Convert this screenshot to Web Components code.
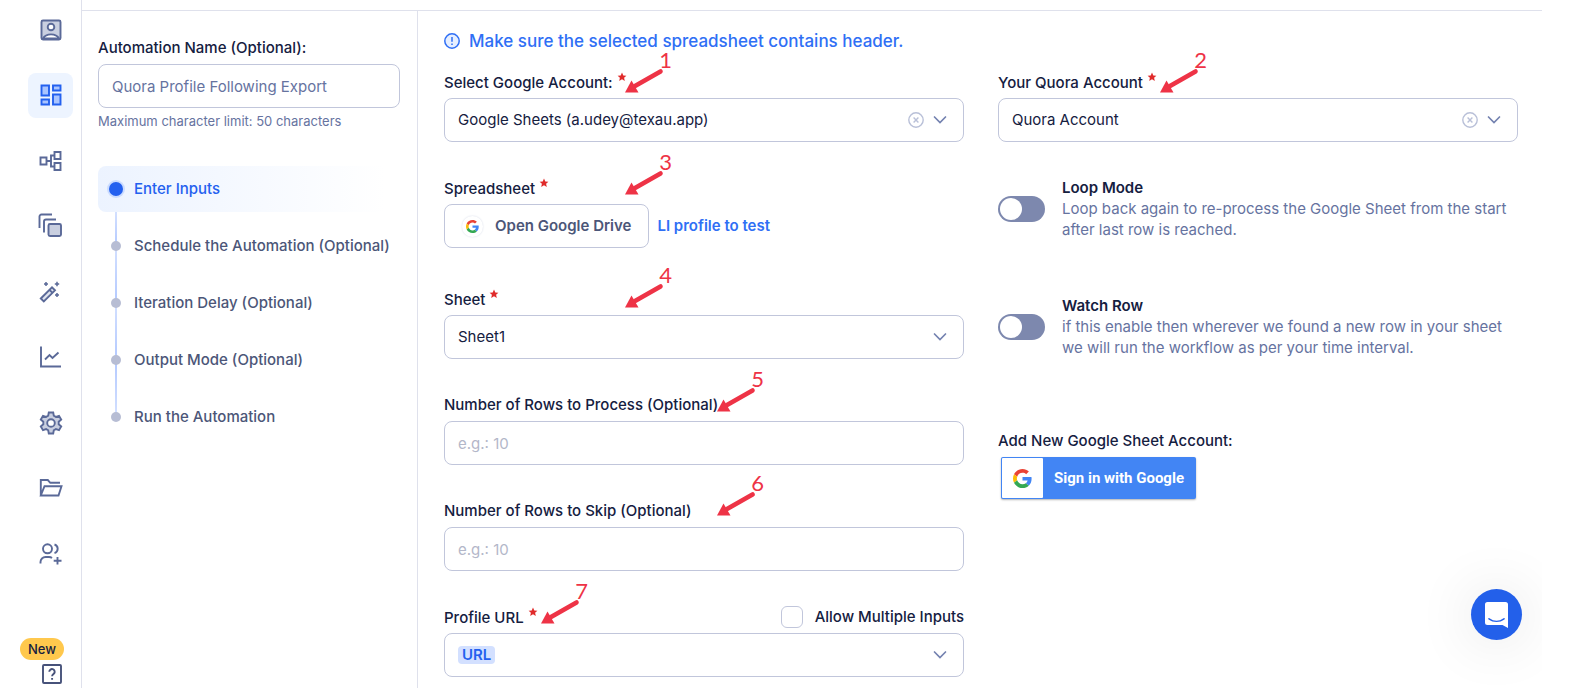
<!DOCTYPE html>
<html lang="en">
<head>
  <meta charset="UTF-8">
  <meta name="viewport" content="width=device-width, initial-scale=1.0">
  <title>Quora Profile Following Export</title>
  <style>
    body {
      margin: 0;
      background: #fff;
      color: #15203f;
      font-family: Inter, "Liberation Sans", sans-serif;
      font-size: 15px;
      line-height: 20px;
    }
  </style>
</head>
<body>
  <automation-app></automation-app>

  <script>
    // shared by every field component
    const fieldStyles = `
      * { box-sizing: border-box; }
      :host { display: block; position: relative; }
      .head { display: flex; align-items: center; justify-content: space-between; height: 22px; margin-bottom: 5px; }
      .label { font-weight: 500; white-space: nowrap; }
      .star { width: 10px; height: 10px; vertical-align: 6px; }
      .box {
        display: flex;
        align-items: center;
        width: 100%;
        height: 44px;
        border: 1px solid #c1c6db;
        border-radius: 8px;
        background: #fff;
      }
      input, select, button { font: inherit; color: inherit; }
    `;

    const star = `<svg class="star" viewBox="0 0 10 10" aria-hidden="true"><path fill="#e02b2b" d="M5 .6l1.3 2.8 3.1.3-2.3 2.1.7 3.1L5 7.3 2.2 8.9l.7-3.1L.6 3.7l3.1-.3z"/></svg>`;
    const chevron = `<svg class="chevron" width="14" height="10" viewBox="0 0 14 10" aria-hidden="true"><path d="M1.500 2L7 7.500l5.500-5.500" fill="none" stroke="#7482b0" stroke-width="1.700" stroke-linecap="round"/></svg>`;
    const googleG = `
      <svg class="g" viewBox="0 0 48 48" aria-hidden="true">
        <path fill="#ea4335" d="M24 9.500c3.540 0 6.710 1.220 9.210 3.600l6.850-6.850C35.900 2.380 30.470 0 24 0 14.620 0 6.510 5.380 2.560 13.220l7.980 6.190C12.430 13.720 17.740 9.500 24 9.500z"/>
        <path fill="#4285f4" d="M46.980 24.550c0-1.570-.150-3.090-.380-4.550H24v9.020h12.940c-.580 2.960-2.260 5.480-4.780 7.180l7.730 6c4.510-4.180 7.090-10.360 7.090-17.650z"/>
        <path fill="#fbbc05" d="M10.530 28.590c-.480-1.450-.760-2.990-.760-4.590s.270-3.140.760-4.590l-7.980-6.190C.920 16.460 0 20.120 0 24s.920 7.540 2.560 10.780l7.970-6.190z"/>
        <path fill="#34a853" d="M24 48c6.480 0 11.930-2.130 15.890-5.810l-7.730-6c-2.150 1.450-4.920 2.300-8.160 2.300-6.260 0-11.570-4.220-13.470-9.910l-7.980 6.190C6.510 42.620 14.620 48 24 48z"/>
      </svg>`;

    class TextField extends HTMLElement {
      constructor() {
        super();
        this.attachShadow({ mode: 'open' });
        this.render();
      }

      render() {
        this.shadowRoot.innerHTML = `
          <style>
            ${fieldStyles}
            input.box { padding: 0 13px; outline: none; color: #66739f; }
            input::placeholder { color: #b3b7c9; opacity: 1; }
            .hint { margin-top: 5px; font-size: 13px; line-height: 16px; color: #66739f; }
          </style>
          <div class="head"><label class="label" for="control">${this.getAttribute('label')}</label></div>
          <input class="box" id="control" type="text"
            value="${this.getAttribute('value') || ''}"
            placeholder="${this.getAttribute('placeholder') || ''}">
          ${this.hasAttribute('hint') ? `<div class="hint">${this.getAttribute('hint')}</div>` : ''}
          <slot></slot>
        `;
      }
    }
    customElements.define('text-field', TextField);

    class SelectField extends HTMLElement {
      constructor() {
        super();
        this.attachShadow({ mode: 'open' });
        this.render();
      }

      render() {
        const clear = `
          <button class="clear" type="button" aria-label="Clear">
            <svg width="16" height="16" viewBox="0 0 16 16"><circle cx="8" cy="8" r="7.200"/><path d="M5.600 5.600l4.800 4.800M10.400 5.600l-4.800 4.800"/></svg>
          </button>`;
        this.shadowRoot.innerHTML = `
          <style>
            ${fieldStyles}
            .box { position: relative; }
            select {
              flex: 1;
              align-self: stretch;
              min-width: 0;
              padding: 0 64px 0 13px;
              border: 0;
              border-radius: 8px;
              outline: none;
              background: none;
              appearance: none;
            }
            .chevron { position: absolute; right: 16px; pointer-events: none; }
            .clear { position: absolute; right: 39px; height: 16px; padding: 0; border: 0; background: none; }
            .clear svg { display: block; fill: none; stroke: #b9c0d8; stroke-width: 1.4; }
            .chip {
              margin-left: 13px;
              padding: 0 4px;
              border-radius: 4px;
              background: #d3e0ff;
              color: #2360ef;
              font-size: 15px;
              line-height: 18px;
              font-weight: 600;
            }
          </style>
          <div class="head">
            <label class="label" for="control">${this.getAttribute('label')} ${this.hasAttribute('required') ? star : ''}</label>
            <slot name="extra"></slot>
          </div>
          <div class="box">
            ${this.hasAttribute('chip') ? `<span class="chip">${this.getAttribute('chip')}</span>` : ''}
            <select id="control"><option>${this.getAttribute('value') || ''}</option></select>
            ${this.hasAttribute('clearable') ? clear : ''}
            ${chevron}
          </div>
          <slot></slot>
        `;
      }
    }
    customElements.define('select-field', SelectField);

    class DriveField extends HTMLElement {
      constructor() {
        super();
        this.attachShadow({ mode: 'open' });
        this.shadowRoot.innerHTML = `
          <style>
            ${fieldStyles}
            .row { display: flex; align-items: center; gap: 8px; }
            button.box { width: auto; padding: 0 17px; gap: 12px; font-weight: 600; color: #4c5678; }
            .round { display: grid; place-items: center; width: 21px; height: 21px; border-radius: 50%; box-shadow: 0 0 2px #d5d9e6; }
            .g { width: 13px; height: 13px; }
            a { color: #2f6ff5; font-weight: 600; text-decoration: none; }
          </style>
          <div class="head"><label class="label" for="control">Spreadsheet ${star}</label></div>
          <div class="row">
            <button class="box" id="control" type="button"><span class="round">${googleG}</span>Open Google Drive</button>
            <a href="#sheet">LI profile to test</a>
          </div>
          <slot></slot>
        `;
      }
    }
    customElements.define('drive-field', DriveField);

    class CheckOption extends HTMLElement {
      constructor() {
        super();
        this.attachShadow({ mode: 'open' });
        this.shadowRoot.innerHTML = `
          <style>
            :host { display: block; }
            label { display: flex; align-items: center; gap: 12px; font-weight: 500; }
            input { appearance: none; box-sizing: border-box; width: 22px; height: 22px; margin: 0; border: 1px solid #c1c6db; border-radius: 6px; }
          </style>
          <label><input type="checkbox"><slot></slot></label>
        `;
      }
    }
    customElements.define('check-option', CheckOption);

    class ToggleOption extends HTMLElement {
      constructor() {
        super();
        this.attachShadow({ mode: 'open' });
        this.shadowRoot.innerHTML = `
          <style>
            :host { display: block; }
            label { display: flex; align-items: center; gap: 17px; line-height: 21px; color: #66739f; }
            input { appearance: none; flex: none; display: flex; box-sizing: border-box; width: 47px; height: 26px; margin: 0; padding: 2px; border-radius: 13px; background: #7d88ae; }
            input::before { content: ""; width: 22px; height: 22px; border-radius: 50%; background: #fff; }
            input:checked { justify-content: flex-end; background: #2360ef; }
            strong { display: block; font-weight: 600; color: #15203f; }
          </style>
          <label>
            <input type="checkbox">
            <span><strong>${this.getAttribute('heading')}</strong><slot></slot></span>
          </label>
        `;
      }
    }
    customElements.define('toggle-option', ToggleOption);

    class GoogleSignIn extends HTMLElement {
      constructor() {
        super();
        this.attachShadow({ mode: 'open' });
        this.shadowRoot.innerHTML = `
          <style>
            :host { display: block; }
            p { margin: 0 0 5px; line-height: 22px; font-weight: 500; }
            button {
              display: flex;
              align-items: stretch;
              height: 42px;
              margin: 0 3px;
              padding: 1px;
              border: 0;
              border-radius: 2px;
              background: #4285f4;
              box-shadow: 0 1px 2px rgba(0, 0, 0, .3);
              color: #fff;
              font: 700 15px/40px Roboto, sans-serif;
            }
            .logo { display: grid; place-items: center; width: 41px; border-radius: 1px; background: #fff; }
            .g { width: 19px; height: 19px; }
            .text { padding: 0 11px; }
          </style>
          <p>Add New Google Sheet Account:</p>
          <button type="button"><span class="logo">${googleG}</span><span class="text">Sign in with Google</span></button>
        `;
      }
    }
    customElements.define('google-sign-in', GoogleSignIn);

    // numbered red arrow lying over a field, --x and --y are the arrow tip
    class StepMarker extends HTMLElement {
      constructor() {
        super();
        this.attachShadow({ mode: 'open' });
        this.shadowRoot.innerHTML = `
          <style>
            :host { position: absolute; top: calc(var(--y) - 44px); left: var(--x); width: 52px; height: 44px; pointer-events: none; color: #ee3346; }
            svg { position: absolute; left: 0; bottom: 0; }
            span { position: absolute; right: 5px; top: 2px; font: 400 22px/18px Lato, sans-serif; }
          </style>
          <svg width="40" height="26" viewBox="0 0 40 26" aria-hidden="true">
            <path d="M35.500 4.500L10 19" stroke="currentColor" stroke-width="4.600" stroke-linecap="round"/>
            <path d="M0 25.500L6.500 13.500 13.500 25.500z" fill="currentColor"/>
          </svg>
          <span><slot></slot></span>
        `;
      }
    }
    customElements.define('step-marker', StepMarker);

    class SideNav extends HTMLElement {
      constructor() {
        super();
        this.attachShadow({ mode: 'open' });
        this.render();
      }

      render() {
        const icons = [
          ['Profile', `<rect x="2.500" y="2.500" width="19" height="19" rx="1.500" fill="#c9cfe0"/><circle cx="12" cy="9" r="3.300" fill="#fff"/><path d="M4 20.500c3-5.500 13-5.500 16 0z" fill="#fff"/>`],
          ['Automations', `<path d="M2.500 2.500h7.500v10H2.500zM14 2.500h7.500v5H14zM2.500 16.500h7.500v5H2.500zM14 11.500h7.500v10H14z" fill="#a9c4ff"/>`],
          ['Workflows', `<path d="M1.500 8.500h6v7h-6zM15.500 3h6v7h-6zM15.500 14h6v7h-6zM7.500 12h4.500M15.500 6.500H12v11h3.500"/>`],
          ['Library', `<path d="M.500 14V2.500a2 2 0 012-2H13M5 18.500V7.500a2 2 0 012-2h10"/><rect x="9.500" y="10" width="12.500" height="12" rx="1.500" fill="#c9cfe0"/>`],
          ['Magic', `<path d="M1.800 18.500L13 7.300l3 3L4.800 21.500zM10.500 9.800l3 3" fill="#dfe3ee"/><path d="M7 2v4M5 4h4M18 1.800v4.400M15.800 4h4.400M18 13v4M16 15h4" stroke-width="1.500"/>`],
          ['Analytics', `<path d="M2 1.500v20h20M6 14.500l4.500-4.500 3 3L19.500 7.500"/>`],
          ['Settings', `<path d="M9.800 1.500h4.400l.6 3.200 2.100 1.200 3.100-1.100 2.200 3.800-2.500 2.100v2.600l2.500 2.100-2.200 3.800-3.100-1.100-2.100 1.200-.6 3.200H9.800l-.6-3.200-2.100-1.200L4 19.200l-2.200-3.800 2.500-2.100v-2.600L1.800 8.600 4 4.800l3.100 1.100 2.100-1.200z" fill="#c9cfe0"/><circle cx="12" cy="12" r="3.800" fill="#fff"/>`],
          ['Files', `<path d="M1.800 19.500V4h7l2.500 2.800H21M1.800 19.500l3.700-9.300h17l-3 9.300z"/>`],
          ['Team', `<circle cx="8.500" cy="6.800" r="4.500"/><path d="M1.500 21.500v-1.500a5 5 0 015-5H10c1.300 0 2.200.3 3 .9M15.500 2.500a4.500 4.500 0 010 8.600M18.500 15v7.500M14.700 18.800h7.800"/>`]
        ];
        this.shadowRoot.innerHTML = `
          <style>
            :host { display: flex; flex-direction: column; box-sizing: border-box; width: 82px; min-height: 100vh; border-right: 1px solid #dfe1ec; }
            nav { flex: 1; display: flex; flex-direction: column; justify-content: space-between; padding: 7px 8px 62px 28px; }
            a { display: grid; place-items: center; width: 45px; height: 45px; border-radius: 8px; color: #5a6998; text-decoration: none; }
            a.active { background: #edf4ff; color: #2360ef; }
            svg { width: 24px; height: 24px; overflow: visible; fill: none; stroke: currentColor; stroke-width: 1.9; }
            .foot { display: flex; flex-direction: column; gap: 4px; padding: 0 17px 4px 20px; }
            .badge { width: 44px; border-radius: 11px; background: #ffc84d; font-size: 13px; line-height: 22px; font-weight: 500; text-align: center; }
            .help { display: block; width: auto; height: 20px; margin-left: 20px; color: #47527a; }
            .help svg { display: block; width: 20px; height: 20px; }
          </style>
          <nav>
            ${icons.map(([name, shape], i) => `<a href="#${name.toLowerCase()}" aria-label="${name}"${i === 1 ? ' class="active"' : ''}><svg viewBox="0 0 24 24">${shape}</svg></a>`).join('')}
          </nav>
          <div class="foot">
            <span class="badge">New</span>
            <a class="help" href="#help" aria-label="Help">
              <svg viewBox="0 0 20 20"><rect x="1" y="1" width="18" height="18" rx="1"/><path d="M7.300 7.800a2.700 2.700 0 115 1.400c-.8 1-2.200 1.400-2.200 3.100M10.100 14v1.800"/></svg>
            </a>
          </div>
        `;
      }
    }
    customElements.define('side-nav', SideNav);

    class StepList extends HTMLElement {
      constructor() {
        super();
        this.attachShadow({ mode: 'open' });
        const steps = ['Enter Inputs', 'Schedule the Automation (Optional)', 'Iteration Delay (Optional)', 'Output Mode (Optional)', 'Run the Automation'];
        this.shadowRoot.innerHTML = `
          <style>
            :host { display: block; }
            ol { display: grid; gap: 11px; margin: 0; padding: 0; list-style: none; }
            li { position: relative; display: flex; align-items: center; height: 46px; font-weight: 500; color: #4c5678; white-space: nowrap; }
            .dot { position: relative; z-index: 1; width: 10px; height: 10px; margin: 0 13px; border-radius: 50%; background: #b7bdd4; }
            li + li::before { content: ""; position: absolute; left: 17px; bottom: 23px; width: 2px; height: 57px; background: linear-gradient(#d3e0ff, #b3c9ff); }
            li:last-child::before { background: linear-gradient(#b3c9ff, #d3e0ff); }
            li:nth-child(2)::before { height: 34px; }
            .active { border-radius: 8px; background: linear-gradient(90deg, #ecf3ff, #fff 95%); color: #2360ef; }
            .active .dot { width: 14px; height: 14px; margin: 0 11px; background: #2360ef; box-shadow: 0 0 0 2px #cbdcff; }
          </style>
          <ol>${steps.map((step, i) => `<li${i === 0 ? ' class="active"' : ''}><span class="dot"></span>${step}</li>`).join('')}</ol>
        `;
      }
    }
    customElements.define('step-list', StepList);

    class ChatLauncher extends HTMLElement {
      constructor() {
        super();
        this.attachShadow({ mode: 'open' });
        this.shadowRoot.innerHTML = `
          <style>
            :host { position: absolute; right: 20px; bottom: 48px; }
            button { display: grid; place-items: center; width: 51px; height: 51px; padding: 0; border: 0; border-radius: 50%; background: #2360ea; box-shadow: 0 2px 60px rgba(0, 0, 0, .12); }
            svg { display: block; }
          </style>
          <button type="button" aria-label="Open chat">
            <svg width="24" height="26" viewBox="0 0 24 26"><path fill="#fff" d="M2.500 0h18A2.500 2.500 0 0123 2.500V26l-5.500-3h-15A2.500 2.500 0 010 20.500v-18A2.500 2.500 0 012.500 0z"/><path d="M4 16.800c4.500 3.200 10.500 3.200 15 0" fill="none" stroke="#2360ea" stroke-width="1.600" stroke-linecap="round"/></svg>
          </button>
        `;
      }
    }
    customElements.define('chat-launcher', ChatLauncher);

    class AutomationApp extends HTMLElement {
      constructor() {
        super();
        this.attachShadow({ mode: 'open' });
        this.render();
      }

      render() {
        const template = document.createElement('template');
        template.innerHTML = `
          <style>
            * { box-sizing: border-box; }
            :host { display: flex; min-height: 100vh; box-sizing: border-box; padding-right: 27px; }
            side-nav { flex: none; }
            .page { flex: 1; display: flex; flex-direction: column; min-width: 0; position: relative; overflow: hidden; }
            header { height: 11px; border-bottom: 1px solid #dfe1ec; }
            .content { flex: 1; display: flex; }
            aside { flex: none; width: 336px; padding: 26px 17px 0 16px; border-right: 1px solid #dfe1ec; }
            step-list { margin-top: 37px; }
            main { flex: 1; min-width: 0; padding: 18px 24px 8px 26px; }
            .note { display: flex; align-items: center; gap: 9px; margin: 0 0 18px; font-size: 17px; line-height: 24px; font-weight: 500; color: #2f6ff5; }
            .columns { display: grid; grid-template-columns: 1fr 1fr; gap: 34px; align-items: start; }
            .fields, .options { display: flex; flex-direction: column; gap: 35px; }
            drive-field { margin-bottom: 5px; }
            toggle-option + toggle-option { margin: 20px 0 37px; }
          </style>
          <side-nav></side-nav>
          <div class="page">
            <header></header>
            <div class="content">
              <aside>
                <text-field label="Automation Name (Optional):" value="Quora Profile Following Export" hint="Maximum character limit: 50 characters"></text-field>
                <step-list></step-list>
              </aside>
              <main>
                <p class="note">
                  <svg width="16" height="16" viewBox="0 0 16 16" fill="none" stroke="#2f6ff5" aria-hidden="true"><circle cx="8" cy="8" r="7.200" fill="#e6efff" stroke-width="1.500"/><path d="M8 4v4.800M8 10.500v1.600" stroke-width="1.500"/></svg>
                  Make sure the selected spreadsheet contains header.
                </p>
                <div class="columns">
                  <div class="fields">
                    <select-field label="Select Google Account:" value="Google Sheets (a.udey@texau.app)" required clearable><step-marker style="--x: 181px; --y: 22px">1</step-marker></select-field>
                    <drive-field><step-marker style="--x: 181px; --y: 18px">3</step-marker></drive-field>
                    <select-field label="Sheet" value="Sheet1" required><step-marker style="--x: 181px; --y: 20px">4</step-marker></select-field>
                    <text-field label="Number of Rows to Process (Optional)" placeholder="e.g.: 10"><step-marker style="--x: 273px; --y: 18px">5</step-marker></text-field>
                    <text-field label="Number of Rows to Skip (Optional)" placeholder="e.g.: 10"><step-marker style="--x: 273px; --y: 16px">6</step-marker></text-field>
                    <select-field label="Profile URL" chip="URL" required>
                      <check-option slot="extra">Allow Multiple Inputs</check-option>
                      <step-marker style="--x: 97px; --y: 18px">7</step-marker>
                    </select-field>
                  </div>
                  <div class="options">
                    <select-field label="Your Quora Account" value="Quora Account" required clearable><step-marker style="--x: 162px; --y: 22px">2</step-marker></select-field>
                    <toggle-option heading="Loop Mode">Loop back again to re-process the Google Sheet from the start after last row is reached.</toggle-option>
                    <toggle-option heading="Watch Row">if this enable then wherever we found a new row in your sheet we will run the workflow as per your time interval.</toggle-option>
                    <google-sign-in></google-sign-in>
                  </div>
                </div>
              </main>
            </div>
            <chat-launcher></chat-launcher>
          </div>
        `;
        this.shadowRoot.appendChild(template.content.cloneNode(true));
      }
    }
    customElements.define('automation-app', AutomationApp);
  </script>
</body>
</html>
